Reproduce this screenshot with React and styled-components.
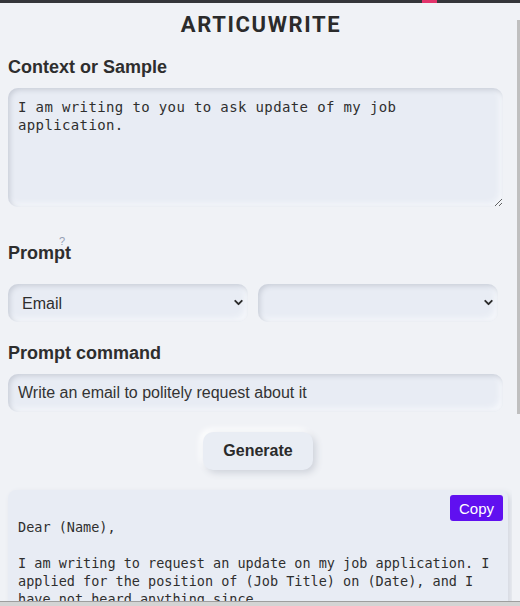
import React from "react";
import styled, { createGlobalStyle } from "styled-components";
import { ChevronDown } from "lucide-react";

const output = `Dear (Name),

I am writing to request an update on my job application. I applied for the position of (Job Title) on (Date), and I have not heard anything since.`;

export default function App() {
  return (
    <>
      <GlobalStyle />
      <Frame>
        <TopBar>
          <TabMark />
        </TopBar>
        <Body>
          <Main>
            <Title>ARTICUWRITE</Title>
            <Label>Context or Sample</Label>
            <Context
              defaultValue="I am writing to you to ask update of my job application."
              spellCheck={false}
            />
            <Label $top={35}>
              Prompt
              <Hint>?</Hint>
            </Label>
            <SelectRow>
              <SelectWrap>
                <Select defaultValue="email">
                  <option value="email">Email</option>
                </Select>
                <Chevron size={13} strokeWidth={3.5} />
              </SelectWrap>
              <SelectWrap>
                <Select defaultValue="">
                  <option value=""></option>
                </Select>
                <Chevron size={13} strokeWidth={3.5} />
              </SelectWrap>
            </SelectRow>
            <Label $top={20}>Prompt command</Label>
            <CommandInput
              defaultValue="Write an email to politely request about it"
              spellCheck={false}
            />
            <ButtonRow>
              <GenerateButton>Generate</GenerateButton>
            </ButtonRow>
            <Output>
              <CopyButton>Copy</CopyButton>
              <OutputText>{output}</OutputText>
            </Output>
          </Main>
          <ScrollTrack>
            <ScrollThumb />
          </ScrollTrack>
        </Body>
        <BottomBar />
      </Frame>
    </>
  );
}

const GlobalStyle = createGlobalStyle`
  html, body {
    margin: 0;
    padding: 0;
    background: #f0f2f6;
  }
  body {
    font-family: "Liberation Sans", Arial, sans-serif;
    color: #2e2e2e;
  }
  * {
    box-sizing: border-box;
  }
`;

const Frame = styled.div`
  width: 520px;
  height: 606px;
  display: flex;
  flex-direction: column;
  overflow: hidden;
  background: #f0f2f6;
`;

const TopBar = styled.div`
  height: 3px;
  flex-shrink: 0;
  background: #35363a;
  display: flex;
  padding-left: 422px;
`;

const TabMark = styled.div`
  width: 15px;
  height: 3px;
  background: #e2336b;
`;

const Body = styled.div`
  flex: 1;
  display: flex;
  min-height: 0;
`;

const Main = styled.div`
  width: 512px;
  flex-shrink: 0;
  padding: 0 0 0 8px;
  overflow: hidden;
`;

const Title = styled.h1`
  margin: 9px 0 0;
  font-family: Roboto, "Liberation Sans", sans-serif;
  font-size: 22px;
  line-height: 26px;
  font-weight: 700;
  letter-spacing: 1.6px;
  text-align: center;
  color: #2b2b2b;
  padding-left: 2px;
`;

const Label = styled.h3`
  position: relative;
  margin: ${(p) => p.$top ?? 18}px 0 0;
  font-size: 18px;
  line-height: 22px;
  font-weight: 700;
  color: #2e2e2e;
`;

const Hint = styled.span`
  position: absolute;
  left: 51px;
  top: -5px;
  font-size: 11px;
  line-height: 8px;
  font-weight: 400;
  color: #94a0b4;
`;

const fieldShadow = `
  box-shadow: inset 2px 2px 5px #c9ced8, inset -3px -3px 6px #f7f9fc;
`;

const Context = styled.textarea`
  display: block;
  margin: 10px 0 0;
  width: 495px;
  height: 119px;
  padding: 10px;
  border: none;
  border-radius: 10px;
  background: #e8ecf4;
  ${fieldShadow}
  font-family: "DejaVu Sans Mono", monospace;
  font-size: 14px;
  letter-spacing: 0.37px;
  line-height: 18px;
  color: #2f2f2f;
  resize: vertical;
  outline: none;
`;

const SelectRow = styled.div`
  margin-top: 20px;
  width: 490px;
  display: grid;
  grid-template-columns: 1fr 1fr;
  gap: 10px;
`;

const SelectWrap = styled.div`
  position: relative;
  height: 38px;
`;

const Select = styled.select`
  appearance: none;
  width: 100%;
  height: 100%;
  padding: 0 30px 0 14px;
  border: none;
  border-radius: 10px;
  background: #e8ecf4;
  ${fieldShadow}
  font-family: "Liberation Sans", Arial, sans-serif;
  font-size: 16px;
  color: #2e2e2e;
  outline: none;
`;

const Chevron = styled(ChevronDown)`
  position: absolute;
  right: 3px;
  top: 12px;
  color: #2b2b2b;
  pointer-events: none;
`;

const CommandInput = styled.input`
  display: block;
  margin: 10px 0 0;
  width: 495px;
  height: 38px;
  padding: 0 10px;
  border: none;
  border-radius: 10px;
  background: #e8ecf4;
  ${fieldShadow}
  font-family: "Liberation Sans", Arial, sans-serif;
  font-size: 16px;
  color: #333;
  outline: none;
`;

const ButtonRow = styled.div`
  margin-top: 20px;
  width: 495px;
  height: 38px;
  display: flex;
  justify-content: center;
  padding-left: 5px;
`;

const GenerateButton = styled.button`
  width: 110px;
  height: 38px;
  border: none;
  border-radius: 10px;
  background: #e9edf4;
  box-shadow: 3px 3px 7px #cfd3db, -3px -3px 6px #ffffff;
  font-family: "Liberation Sans", Arial, sans-serif;
  font-size: 16px;
  font-weight: 700;
  color: #2a2a2a;
  cursor: pointer;
`;

const Output = styled.div`
  position: relative;
  margin-top: 20px;
  width: 500px;
  min-height: 140px;
  padding: 28px 10px 10px;
  border-radius: 8px;
  background: #e8ecf4;
  box-shadow: 3px 3px 6px #d4d8e0;
`;

const CopyButton = styled.button`
  position: absolute;
  top: 5px;
  right: 5px;
  width: 53px;
  height: 26px;
  border: none;
  border-radius: 3px;
  background: #6010f0;
  color: #fff;
  font-family: "Liberation Sans", Arial, sans-serif;
  font-size: 15px;
  padding: 0;
`;

const OutputText = styled.pre`
  margin: 0;
  white-space: pre-wrap;
  font-family: "DejaVu Sans Mono", monospace;
  font-size: 13.5px;
  line-height: 18px;
  color: #2f2f2f;
`;

const ScrollTrack = styled.div`
  width: 8px;
  padding: 17px 0 0 5px;
`;

const ScrollThumb = styled.div`
  width: 3px;
  height: 394px;
  background: #bfbfbf;
`;

const BottomBar = styled.div`
  height: 5px;
  flex-shrink: 0;
  background: #d4d4d4;
  border-top: 1px solid #9e9e9e;
`;
